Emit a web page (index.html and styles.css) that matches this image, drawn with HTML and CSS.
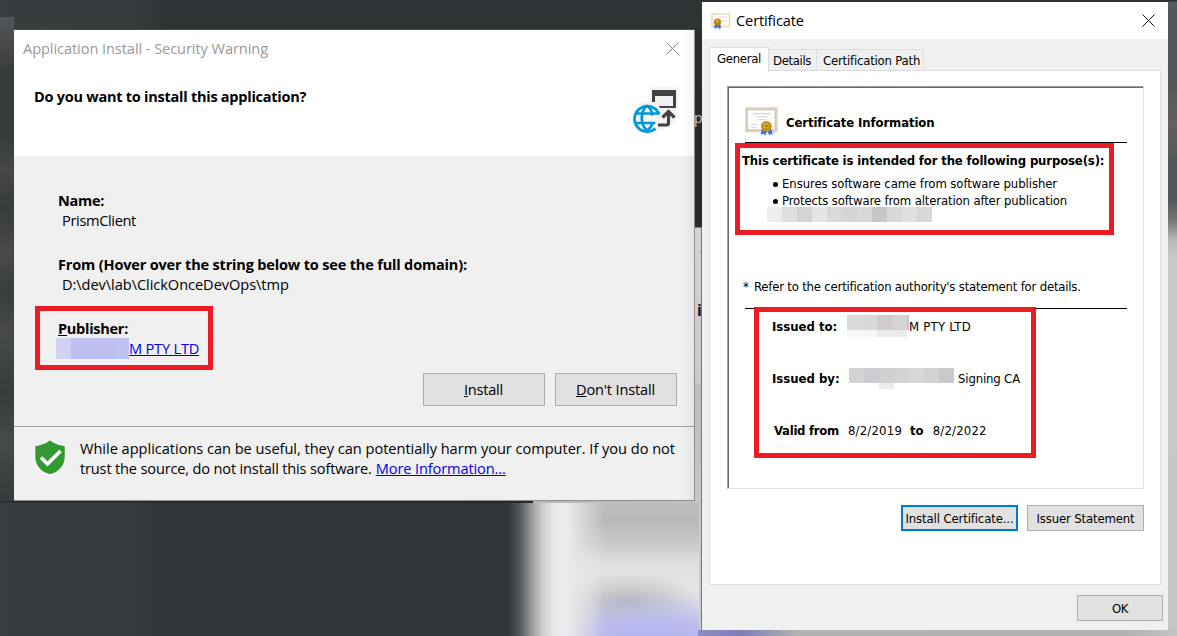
FILE: index.html
```html
<!DOCTYPE html>
<html lang="en">
<head>
<meta charset="utf-8">
<title>Application Install - Security Warning</title>
<link rel="stylesheet" href="styles.css">
</head>
<body>
<div class="desktop">
  <div class="bg-top"></div>
  <div class="bg-left"></div>
  <div class="bg-page"></div>
  <div class="bg-gap"><span class="peek-p">p</span><span class="peek-dash"></span><span class="peek-i">i</span></div>
  <div class="bg-lower"></div>
  <div class="bg-seam"></div>
  <div class="bg-right"></div>
  <div class="bg-bottom"></div>
  <div class="bg-edge"></div>

  <section class="window installer">
    <header class="ins-head">
      <div class="ins-title">
        <span class="t t-title">Application Install - Security Warning</span>
        <svg class="close" width="13" height="13" viewBox="0 0 13 13"><path d="M.5.5l12 12M12.500.5l-12 12" stroke="#858585" fill="none"/></svg>
      </div>
      <div class="ins-question">
        <b class="t t-question">Do you want to install this application?</b>
        <svg class="app-icon" width="50" height="50" viewBox="0 0 50 50">
          <path d="M19 2h30v23l-3 2 2 3-4 7-11 8H23z" fill="#f5f5f6"/>
          <circle cx="17" cy="33" r="16" fill="#f5f5f6"/>
          <path d="M22 5h24v18H30.500l-2-2H43V11H25v6h-3z" fill="#424242"/>
          <path d="M25 11h18v10H28l-3-3z" fill="#f0eff1"/>
          <g fill="none" stroke="#0098dc" stroke-width="2.700">
            <path d="M25.500 43.500A12.700 12.700 0 1 1 28.500 28"/>
            <path d="M17 20.500c-7 6-7 19 0 25M17 20.500c4 3 5 6 5.500 10M17 45.500c3-2 5-5 5.500-8M6 28.500h24M6 38h20"/>
          </g>
          <path d="M24.500 31h5.500v12h-4z" fill="#f5f5f6"/>
          <path d="M28 40h8.500q2 0 2-2V28.500M32.500 32.500l6-6 6 6" fill="none" stroke="#424242" stroke-width="3.200"/>
        </svg>
      </div>
    </header>
    <div class="ins-body">
      <b class="t t-name">Name:</b>
      <span class="t t-prism ind">PrismClient</span>
      <b class="t t-from gap">From (Hover over the string below to see the full domain):</b>
      <span class="t t-path ind">D:\dev\lab\ClickOnceDevOps\tmp</span>
      <b class="t t-pub gap"><u>P</u>ublisher:</b>
      <div class="publisher"><i class="mosaic mosaic-blue"></i><a class="t t-pty">M PTY LTD</a></div>
      <div class="ins-buttons">
        <button><span class="t t-install"><u>I</u>nstall</span></button>
        <button><span class="t t-dont"><u>D</u>on't Install</span></button>
      </div>
    </div>
    <footer class="ins-foot">
      <svg class="shield" width="34" height="38" viewBox="0 0 34 38">
        <path d="M17 1.500q7 5.500 15.500 6v11C32.500 28 26 35 17 37 8 35 1.500 28 1.500 18.500v-11Q10 7 17 1.500z" fill="#339933" stroke="#f8f6f8" stroke-width="1.500"/>
        <path d="M8 19.500l6.500 6.500L27.500 13" fill="none" stroke="#fff" stroke-width="3.600"/>
      </svg>
      <div class="warning">
        <span class="t t-w1">While applications can be useful, they can potentially harm your computer. If you do not</span>
        <div class="warn-line"><span class="t t-w2">trust the source, do not install this software.</span><a class="t t-more">More Information...</a></div>
      </div>
    </footer>
    <div class="edge-shade"></div>
    <div class="mark mark-publisher"></div>
  </section>

  <section class="window certificate">
    <header class="cert-title">
      <svg width="20" height="17" viewBox="0 0 20 17">
        <path d="M1 1h17.500v12.500H1z" fill="#fffdf8" stroke="#ecd9bd" stroke-width="1.500"/>
        <path d="M8 4h8M9 8h7" stroke="#eeeef2" stroke-width="2"/>
        <path d="M4 10L3 15.500l2-1 1 1.500 1-3 1 3 2-1-1-5z" fill="#3466d9"/>
        <circle cx="6.500" cy="9" r="3.600" fill="#bb850d"/><circle cx="6" cy="8" r="1.500" fill="#dcaf37"/>
      </svg>
      <span class="t t-cert">Certificate</span>
      <svg class="close" width="13" height="13" viewBox="0 0 13 13"><path d="M.5.5l12 12M12.500.5l-12 12" stroke="#111" fill="none"/></svg>
    </header>
    <nav class="tabs">
      <div class="tab active"><span class="t t-general">General</span></div>
      <div class="tab tab-details"><span class="t t-details">Details</span></div>
      <div class="tab tab-path"><span class="t t-cpath">Certification Path</span></div>
    </nav>
    <div class="pane">
      <div class="sheet">
        <div class="info-head">
          <svg width="33" height="30" viewBox="0 0 34 30">
            <path d="M1.500 1.500h30.500v22.500H1.500z" fill="#fdfdfb" stroke="#d3c8b9" stroke-width="3"/>
            <path d="M.5.5H33V25H.5z" fill="none" stroke="#e5ddd1"/>
            <path d="M8 6.500h18" stroke="#bac5ee"/><path d="M12 9.500h11M13 12.500h8M6 17.500h7M6 20.500h6" stroke="#d3d4dd"/>
            <path d="M18 20l-2 8 3-1 2 2 2-5 2 5 1.500-2 2.500 1-3-8z" fill="#3474df"/>
            <circle cx="22" cy="19.500" r="5.500" fill="#c58e12"/><circle cx="21.500" cy="18.500" r="3" fill="#d9aa32"/><circle cx="22" cy="19" r="1.500" fill="#b37d0d"/>
          </svg>
          <b class="t t-info">Certificate Information</b>
        </div>
        <b class="t t-purpose">This certificate is intended for the following purpose(s):</b>
        <div class="bullets">
          <div class="bullet"><i class="dot"></i><span class="t t-b1">Ensures software came from software publisher</span></div>
          <div class="bullet"><i class="dot"></i><span class="t t-b2">Protects software from alteration after publication</span></div>
        </div>
        <div class="mosaic mosaic-purpose"></div>
        <div class="refer"><span class="t t-star">*</span><span class="t t-refer">Refer to the certification authority's statement for details.</span></div>
        <div class="issue">
          <div class="row"><b class="t t-ito">Issued to:</b><i class="mosaic mosaic-to"></i><span class="t t-pty2">M PTY LTD</span></div>
          <div class="row"><b class="t t-iby">Issued by:</b><i class="mosaic mosaic-by"></i><span class="t t-ca">Signing CA</span></div>
          <div class="row valid"><b class="t t-valid">Valid from</b><span class="t t-d1">8/2/2019</span><b class="t t-to">to</b><span class="t t-d2">8/2/2022</span></div>
        </div>
      </div>
      <div class="pane-buttons">
        <button class="primary"><span class="t t-icert">Install Certificate...</span></button>
        <button><span class="t t-issuer">Issuer Statement</span></button>
      </div>
    </div>
    <div class="cert-foot"><button><span class="t t-ok">OK</span></button></div>
    <div class="mark mark-purpose"></div>
    <div class="mark mark-issue"></div>
  </section>
</div>
</body>
</html>
```
FILE: styles.css
```css
* { box-sizing: border-box; }
body { margin: 0; background: #2f3436; color: #000; }
.desktop { position: relative; width: 1177px; height: 636px; overflow: hidden; background: #2f3436; }
.t { display: block; white-space: nowrap; }
svg { display: block; flex: none; }
button { display: flex; align-items: center; justify-content: center; padding: 0; font: inherit; color: inherit; background: #e1e1e1; border: 1px solid #adadad; }
a { color: #0000e6; text-decoration: underline; }

/* blurred desktop behind the windows */
.bg-top { position: absolute; left: 0; top: 0; width: 1177px; height: 30px; background: linear-gradient(90deg, #383d3f 0, #363c3e 130px, #2e3335 170px); }
.bg-left { position: absolute; left: 0; top: 17px; width: 14px; height: 619px; background: linear-gradient(#525557 0, #4a4d4f 20px, #373c3e 55px, #363b3d 115px, #45484a 153px, #363b3d 190px, #484b4d 235px, #383d3f 275px, #464a4c 315px, #363b3d 375px, #454a4b 425px, #363b3d 480px, #363b3d); }
.bg-page { position: absolute; left: 0; top: 501px; width: 533px; height: 135px; background: linear-gradient(90deg, #383d3f 0, #363b3d 130px, #2f3436 170px); }
.bg-gap { position: absolute; left: 694px; top: 30px; width: 8px; height: 606px; background: linear-gradient(#2a2e30 0, #25292c 100px, #272b2d 197px, #d2d2d2 198px, #cacaca 354px, #bdbdbd 355px, #c8c8c8 480px, #cfcfcf); }
.peek-p { position: absolute; left: 0; top: 76px; font: 14px/24px "Open Sans", sans-serif; color: #c8c8c8; }
.peek-dash { position: absolute; left: 6px; top: 221px; width: 2px; height: 1px; background: #b06a35; }
.peek-i { position: absolute; left: 3px; top: 270px; font: bold 16px/20px "Open Sans", sans-serif; color: #201020; }
.bg-lower { position: absolute; left: 500px; top: 501px; width: 199px; height: 135px;
  background:
    linear-gradient(90deg, #2f3436 0, #303537 8px, #555a5d 20px, #9b9c9e 32px, #cfd0cf 43px, #e9e9e9 55px, #ebebeb 67px, rgba(232,232,232,.75) 78px, rgba(230,230,230,0) 105px),
    radial-gradient(ellipse 130px 48px at 150px 140px, #b5b5ee 0, rgba(182,182,238,.9) 35%, rgba(200,200,240,0) 100%),
    radial-gradient(ellipse 75px 30px at 128px 101px, rgba(175,175,182,.85) 0, rgba(190,190,195,0) 100%),
    linear-gradient(#bebebe 0, #b9b9b9 20px, #c8c8c6 42px, #e0e0e0 62px, #e6e6e6 90px, #dedee6 110px, #c6c6ec 135px); }
.bg-seam { position: absolute; left: 0; top: 501px; width: 701px; height: 2px; background: linear-gradient(90deg, #2a2e30 0, #25292b 533px, #b8b8b8 533px, #c2c2c2); }
.bg-right { position: absolute; left: 1168px; top: 0; width: 9px; height: 636px; background: linear-gradient(#2a2f32 0, #2a2f32 1px, #53585b 2px, #535759 85px, #655f60 125px, #53575a 160px, #53575a 200px, #757575 220px, #b8b8b8 240px, #c9c9c9 260px, #c6c6c6); }
.bg-bottom { position: absolute; left: 698px; top: 630px; width: 479px; height: 6px; background: linear-gradient(90deg, #8d8dc2 0, #7f7fb8 45px, #9c9cb4 75px, #b3b3b3 100px, #b2b2b2 430px, #c4c4c4); }
.bg-edge { position: absolute; left: 701px; top: 228px; width: 1px; height: 402px; background: #777; }

.window { position: absolute; display: flex; flex-direction: column; }
.mark { position: absolute; border: 5px solid #ed1c24; }

/* installer warning */
.installer { left: 14px; top: 30px; width: 681px; height: 471px; border-right: 1px solid #8f8f8f; border-bottom: 1px solid #8f8f8f; background: #f0f0f0; box-shadow: 0 -1px #444849; font: 14.6px/20px "Open Sans", sans-serif; }
.installer b { font-size: 14.5px; line-height: 22px; height: 20px; }
.ins-head { height: 126px; background: #fff; }
.ins-title { display: flex; justify-content: space-between; padding: 8px 15px 0 9px; height: 50px; color: #999; }
.ins-title .close { margin-top: 4px; }
.ins-question { display: flex; justify-content: space-between; padding: 0 14px 0 20px; }
.t-title { letter-spacing: -.08px; }
.t-question { padding-top: 6px; letter-spacing: -.25px; }
.app-icon { margin-top: 5px; }
.ins-body { display: flex; flex-direction: column; height: 271px; padding: 34px 17px 20px 44px; border-bottom: 1px solid #a0a0a0; }
.ind { padding-left: 4px; }
.gap { margin-top: 24px; }
.t-name { letter-spacing: -.3px; }
.t-prism { letter-spacing: -.35px; }
.t-from { letter-spacing: -.165px; }
.t-path { letter-spacing: -.06px; }
.t-pub { letter-spacing: -.27px; }
.t-pty { letter-spacing: -.2px; }
.publisher { display: flex; height: 20px; margin-left: -2px; }
.mosaic-blue { width: 73px; height: 21px; background: linear-gradient(90deg, #d2d1f2 15px, #bdbdf0 15px 45px, #c0bdf0 45px 60px, #bdc4f1 60px); }
.ins-buttons { display: flex; justify-content: flex-end; gap: 10px; margin-top: 15px; }
.ins-buttons button { width: 122px; height: 33px; padding: 0 1px 1px 0; }
.t-install { letter-spacing: -.24px; }
.t-dont { letter-spacing: -.17px; }
.ins-foot { display: flex; padding: 11px 0 0 19px; }
.warning { padding-left: 13px; }
.warn-line { display: flex; gap: 4px; }
.t-w1 { letter-spacing: -.03px; }
.t-w2 { letter-spacing: -.17px; }
.t-more { letter-spacing: -.12px; }
.edge-shade { position: absolute; right: 0; top: 0; width: 12px; height: 470px; background: linear-gradient(90deg, rgba(0,0,0,0), rgba(0,0,0,.05)); }
.mark-publisher { left: 21px; top: 276px; width: 178px; height: 64px; }

/* certificate viewer */
.certificate { left: 702px; top: 2px; width: 466px; height: 628px; background: #f0f0f0; font: 13px/16px "DejaVu Sans Condensed", "DejaVu Sans", sans-serif; font-stretch: condensed; }
.cert-title { display: flex; height: 37px; padding: 8px 13px 0 9px; background: #fff; font: 14.6px/20px "Open Sans", sans-serif; }
.cert-title svg { margin-top: 3px; }
.t-cert { margin-left: 5px; letter-spacing: -.13px; }
.cert-title .close { margin: 4px 0 0 auto; }
.tabs { position: relative; z-index: 1; display: flex; align-items: flex-end; height: 32px; margin-bottom: -1px; padding-left: 7px; }
.tab { height: 22px; padding: 3px 0 0 4px; border: 1px solid #dcdcdc; background: #f0f0f0; }
.tab.active { width: 60px; height: 25px; margin-bottom: -1px; padding: 3px 0 0 7px; border-bottom: 0; background: #fff; }
.tab-details { width: 48px; border-left: 0; }
.tab-path { width: 107px; padding-left: 6px; border-left: 0; }
.t-general { letter-spacing: -.3px; }
.t-details { letter-spacing: -.35px; }
.t-cpath { letter-spacing: -.2px; }
.pane { width: 452px; height: 515px; margin-left: 7px; padding: 15px 16px 0 17px; border: 1px solid #dcdcdc; background: #fff; }
.sheet { height: 403px; width: 417px; border: 1px solid #a0a0a0; border-right-color: #e3e3e3; border-bottom-color: #e3e3e3; box-shadow: inset 1px 1px #696969; }
.info-head { display: flex; width: 382px; height: 56px; margin-left: 17px; padding-top: 19px; border-bottom: 1px solid #000; }
.info-head svg { margin-top: 1px; }
.t-info { margin: 9px 0 0 8px; letter-spacing: -.11px; }
.t-purpose { margin: 10px 0 0 14px; letter-spacing: -.145px; }
.bullets { padding: 6px 0 0 45px; }
.bullet { display: flex; align-items: center; height: 17px; }
.dot { width: 5px; height: 5px; margin: 1px 4px 0 0; border-radius: 50%; background: #000; }
.t-b1 { letter-spacing: -.08px; }
.t-b2 { letter-spacing: -.14px; }
.mosaic { display: block; flex: none; }
.mosaic-purpose { width: 165px; height: 15px; margin: -2px 0 0 39px; background: linear-gradient(90deg, #eee 15px, #e0dfe0 15px 30px, #d3d4d8 30px 45px, #e6e5e2 45px 60px, #d8dada 60px 75px, #d5d5d8 75px 90px, #d8d8d8 90px 105px, #c8c6c9 105px 120px, #d8d8db 120px 135px, #e0e0e0 135px 150px, #d6d7d9 150px); }
.refer { display: flex; width: 400px; margin: 57px 0 0 15px; }
.t-star { width: 11px; }
.t-refer { letter-spacing: -.2px; }
.issue { width: 382px; margin: 13px 0 0 17px; padding: 10px 0 0 27px; border-top: 1px solid #000; }
.row { display: flex; height: 52px; }
.t-ito { width: 66px; }
.t-iby { width: 68px; }
.t-pty2 { letter-spacing: .25px; }
.t-ca { letter-spacing: -.15px; }
.mosaic-to { width: 62px; height: 22px; margin: -4px 0 0 9px; background: linear-gradient(90deg, #dadada 15px, #d8d8da 15px 30px, #d0cccd 30px 45px, #d4d4d4 45px 60px, #bcc5dc 60px) 0 0/62px 15px no-repeat, linear-gradient(90deg, #f6f6f7 15px, #f5f6fa 15px 30px, #ebebeb 30px 60px, #fff 60px); }
.mosaic-by { width: 105px; height: 21px; margin: -3px 4px 0 9px; background: linear-gradient(90deg, #d4d3d2 15px, #cccbd2 15px 30px, #d1d1d0 30px 45px, #d4d3d1 45px 60px, #d6d8da 60px 75px, #d3d2d0 75px 90px, #cac9cd 90px) 0 0/105px 15px no-repeat, linear-gradient(#ececec, #ececec) 30px 15px/15px 6px no-repeat; }
.valid { padding-left: 2px; }
.t-valid { letter-spacing: -.28px; }
.t-d1, .t-d2 { letter-spacing: .19px; }
.t-d1 { margin-left: 9px; }
.t-to { margin-left: 8px; }
.t-d2 { margin-left: 9px; }
.pane-buttons { display: flex; justify-content: flex-end; gap: 9px; padding-top: 16px; }
.pane-buttons button { width: 117px; height: 26px; padding-top: 1px; }
.pane-buttons .primary { border: 2px solid #0078d7; }
.t-icert { letter-spacing: -.13px; }
.t-issuer { letter-spacing: -.14px; }
.t-ok { letter-spacing: -.4px; }
.cert-foot { display: flex; justify-content: flex-end; padding: 10px 5px 0 0; }
.cert-foot button { width: 86px; height: 26px; padding-top: 1px; }
.mark-purpose { left: 33px; top: 141px; width: 379px; height: 92px; }
.mark-issue { left: 52px; top: 305px; width: 282px; height: 151px; }
```
